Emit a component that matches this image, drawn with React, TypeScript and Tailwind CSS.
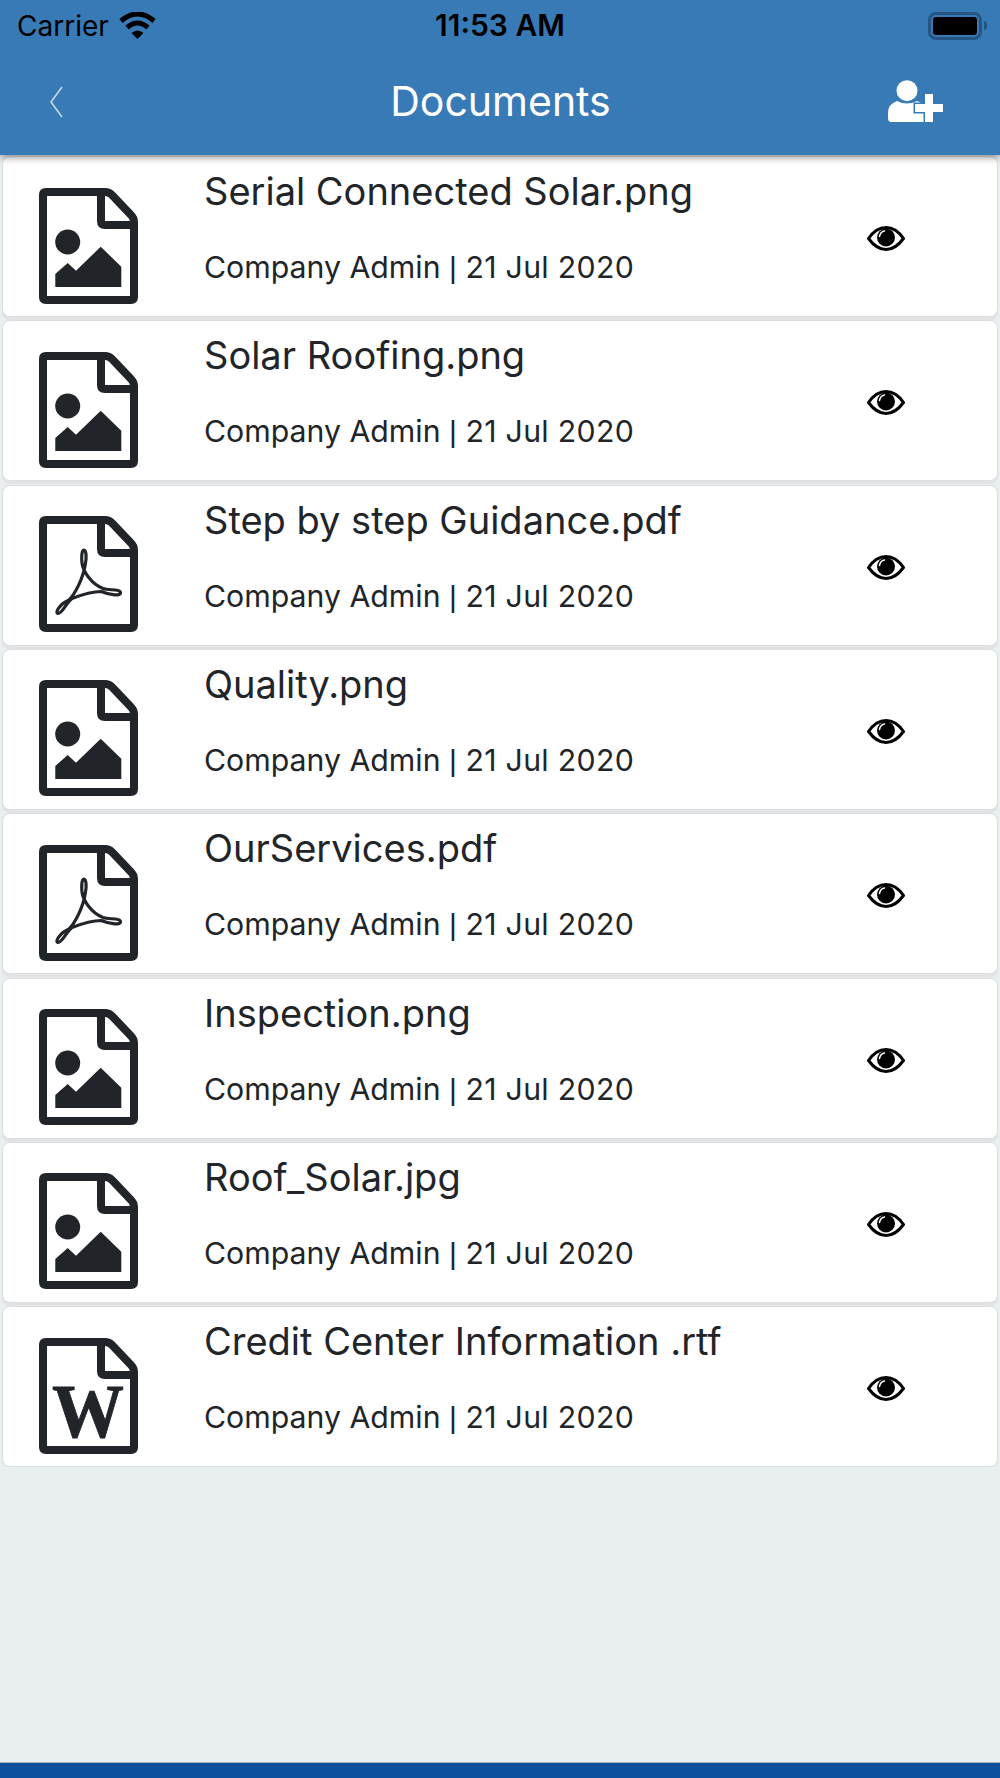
type FileKind = "image" | "pdf" | "word";

const documents: { name: string; kind: FileKind }[] = [
  { name: "Serial Connected Solar.png", kind: "image" },
  { name: "Solar Roofing.png", kind: "image" },
  { name: "Step by step Guidance.pdf", kind: "pdf" },
  { name: "Quality.png", kind: "image" },
  { name: "OurServices.pdf", kind: "pdf" },
  { name: "Inspection.png", kind: "image" },
  { name: "Roof_Solar.jpg", kind: "image" },
  { name: "Credit Center Information .rtf", kind: "word" },
];

function FileIcon({ kind }: { kind: FileKind }) {
  return (
    <svg width="99" height="116" viewBox="0 0 99 116" fill="none">
      <path
        d="M7 4H66Q70 4 73 7L92 27Q95 30 95 34V109Q95 112 92 112H7Q4 112 4 109V7Q4 4 7 4Z"
        stroke="#212529"
        strokeWidth="8"
        strokeLinejoin="round"
      />
      <path d="M62 4V33Q62 37 66 37H95" stroke="#212529" strokeWidth="8" />
      {kind === "image" && (
        <>
          <circle cx="28.7" cy="54" r="12.5" fill="#212529" />
          <path d="M16.3 99V86L28.7 75L37 82.7L61.7 58.7L82.3 78.7V99Z" fill="#212529" />
        </>
      )}
      {kind === "pdf" && (
        <path
          d="M44.8 34C42.5 34 42.5 42 43 47C44 55 52 68 64 72.5C70 74.5 81 73 81.5 76.5C82 80 72 79.5 62 75.5C52 75.5 42 79 33 82.5C27 87 23 98 19 97.5C15.5 96.5 21 88 30 84C36 78 44.5 62 46.5 47C47.5 42 47.5 34 44.8 34Z"
          stroke="#212529"
          strokeWidth="3.2"
          strokeLinejoin="round"
        />
      )}
      {kind === "word" && (
        <text
          x="13"
          y="99"
          fill="#212529"
          stroke="#212529"
          strokeWidth="0.8"
          textLength="72"
          lengthAdjust="spacingAndGlyphs"
          className="font-['Liberation_Serif',serif] text-[76px] font-bold"
        >
          W
        </text>
      )}
    </svg>
  );
}

function EyeIcon() {
  return (
    <svg width="38" height="25" viewBox="0 0 38 25" fill="none">
      <path
        d="M1.5 12.5C7 4.5 13 1.5 19 1.5C25 1.5 31 4.5 36.5 12.5C31 20 25 23.5 19 23.5C13 23.5 7 20 1.5 12.5Z"
        stroke="#000"
        strokeWidth="3"
      />
      <circle cx="19" cy="11.5" r="9" fill="#000" />
      <path d="M12.5 10.5C13 7.5 15 5.5 17.5 5" stroke="#fff" strokeWidth="1.5" strokeLinecap="round" />
    </svg>
  );
}

function WifiIcon() {
  return (
    <svg width="37" height="27" viewBox="0 0 37 27" fill="none">
      <path d="M2 9Q18.5 -5 35 9" stroke="#000" strokeWidth="5" />
      <path d="M8 15.5Q18.5 6.5 29 15.5" stroke="#000" strokeWidth="5" />
      <path d="M12.5 21Q18.5 16 24.5 21L18.5 27Z" fill="#000" />
    </svg>
  );
}

function AddUserIcon() {
  return (
    <svg width="56" height="43" viewBox="0 0 56 43" fill="none">
      <circle cx="19" cy="10.7" r="10.5" fill="#fff" />
      <path d="M3 42Q0 42 0 38V33Q0 24 9 21Q19 26 29 21Q35 23 37 27V42Z" fill="#fff" />
      <path
        d="M37 14H45V24H55V32H45V42H37V32H27V24H37Z"
        fill="#fff"
        stroke="#377ab6"
        strokeWidth="3"
        paintOrder="stroke"
      />
    </svg>
  );
}

export default function App() {
  return (
    <div className="flex h-[1778px] flex-col bg-[#e9eef1] font-['Inter',sans-serif] text-[#212529]">
      <header className="relative z-10 h-[155px] shrink-0 bg-[#377ab6] shadow-[0_2px_8px_rgba(0,0,0,0.45)]">
        <div className="flex h-[50px] items-center justify-between pl-[17px] pr-[13px] pt-[1px] text-black">
          <div className="flex w-[296px] items-center gap-[10px] text-[28px]">
            <span>Carrier</span>
            <WifiIcon />
          </div>
          <span className="text-[30px] font-semibold">11:53 AM</span>
          <div className="flex w-[300px] items-center justify-end gap-[2px]">
            <div className="h-[28px] w-[54px] rounded-[8px] border-[3px] border-[#255583] p-[2px]">
              <div className="h-full rounded-[3px] bg-black" />
            </div>
            <div className="h-[9px] w-[3px] rounded-r-full bg-[#255583]" />
          </div>
        </div>
        <div className="flex h-[101px] items-start justify-between pl-[49px] pr-[56px] pt-[19px]">
          <div className="w-[64px] pt-[17px]">
            <svg width="14" height="32" viewBox="0 0 14 32" fill="none">
              <path d="M13 1L2 16L13 31" stroke="#c5d9ea" strokeWidth="1.6" />
            </svg>
          </div>
          <h1 className="text-[41px] leading-[64px] font-normal text-white">Documents</h1>
          <div className="pt-[11px]">
            <AddUserIcon />
          </div>
        </div>
      </header>

      <main className="grow px-[2px] pt-[1px]">
        {documents.map((doc) => (
          <div
            key={doc.name}
            className="mb-[3.33px] flex h-[161px] items-center rounded-[8px] border border-[#dcdfe1] bg-white shadow-[0_3.33px_0_#e1e3e4] last:shadow-none"
          >
            <div className="w-[201px] shrink-0 pl-[36px] pt-[18px]">
              <FileIcon kind={doc.kind} />
            </div>
            <div className="grow self-start">
              <div className="mt-[7px] text-[38px] leading-[54px]">{doc.name}</div>
              <div className="mt-[29px] text-[30.25px] leading-[40px]">
                Company Admin <span className="font-['Liberation_Sans',sans-serif]">|</span>{" "}
                <span className="tracking-[0.3px]">21 Jul 2020</span>
              </div>
            </div>
            <div className="w-[130px] shrink-0 pt-[4px]">
              <EyeIcon />
            </div>
          </div>
        ))}
      </main>

      <div className="h-[16px] shrink-0 border-t border-[#a9b4bf] bg-[#0c4f9f]" />
    </div>
  );
}
